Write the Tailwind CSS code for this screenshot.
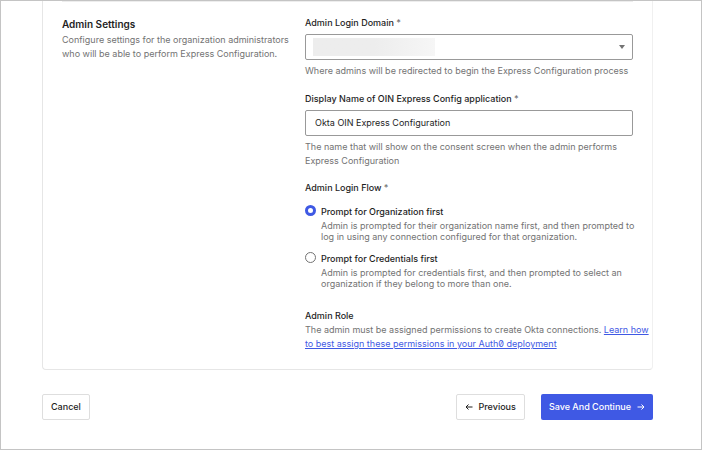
<!DOCTYPE html>
<html lang="en">
<head>
  <meta charset="UTF-8" />
  <meta name="viewport" content="width=device-width, initial-scale=1" />
  <title>Admin Settings</title>

  <!-- Tailwind CSS -->
  <script src="https://cdn.jsdelivr.net/npm/@tailwindcss/browser@4"></script>
</head>
<body class="min-h-screen border border-[#c4c4c4] bg-white pl-[41px] pr-12 font-['Inter',sans-serif] text-[9px] leading-[14px] text-[#737373]">

  <form>
    <!-- Settings card -->
    <section class="rounded-b border-x border-b border-[#e6e6e6] border-r-[#f0f0f0] px-[19px]">
      <div class="grid grid-cols-[231fr_328fr] gap-3 border-t border-[#ededed] pt-3.5 pb-[18px]">

        <div>
          <h2 class="text-[10px] leading-4 font-semibold text-[#1e1e1e]">Admin Settings</h2>
          <p class="mt-px">Configure settings for the organization administrators who will be able to perform Express Configuration.</p>
        </div>

        <div>
          <!-- Login domain -->
          <label for="domain" class="block font-medium text-[#1e1e1e]">Admin Login Domain <span class="text-[#737373]">*</span></label>
          <div class="relative mt-1">
            <select id="domain" class="block h-[26px] w-full appearance-none rounded-xs border border-[#999999] bg-white px-2">
              <option></option>
            </select>
            <div class="pointer-events-none absolute top-1 left-2 h-[18px] w-[122px] bg-gradient-to-r from-[#ededed] via-[#ededed] to-[#f6f6f6]"></div>
            <svg class="pointer-events-none absolute top-[11px] right-2 h-1 w-1.5" viewBox="0 0 6 4" fill="#737373"><path d="M0 0h6L3 4z" /></svg>
          </div>
          <p class="mt-1">Where admins will be redirected to begin the Express Configuration process</p>

          <!-- Display name -->
          <label for="displayName" class="mt-3.5 block font-medium text-[#1e1e1e]">Display Name of OIN Express Config application <span class="text-[#737373]">*</span></label>
          <input id="displayName" type="text" value="Okta OIN Express Configuration" class="mt-1 block h-[26px] w-full rounded-xs border border-[#999999] px-[9px] pb-px text-[#1e1e1e]" />
          <p class="mt-1">The name that will show on the consent screen when the admin performs Express Configuration</p>

          <!-- Login flow -->
          <fieldset class="mt-[13px]">
            <legend class="font-medium text-[#1e1e1e]">Admin Login Flow <span class="text-[#737373]">*</span></legend>
            <div class="mt-2.5 flex items-start gap-[5px]">
              <input id="flowOrg" type="radio" name="flow" checked class="size-[11px] shrink-0 appearance-none rounded-full border border-[#737373] bg-white checked:border-[3px] checked:border-[#3f59e4]" />
              <div class="-mr-4">
                <label for="flowOrg" class="block font-medium text-[#1e1e1e]">Prompt for Organization first</label>
                <p class="mt-px leading-[11px]">Admin is prompted for their organization name first, and then prompted to<br />log in using any connection configured for that organization.</p>
              </div>
            </div>
            <div class="mt-2.5 flex items-start gap-[5px]">
              <input id="flowCreds" type="radio" name="flow" class="size-[11px] shrink-0 appearance-none rounded-full border border-[#737373] bg-white checked:border-[3px] checked:border-[#3f59e4]" />
              <div class="-mr-4">
                <label for="flowCreds" class="block font-medium text-[#1e1e1e]">Prompt for Credentials first</label>
                <p class="mt-px leading-[11px]">Admin is prompted for credentials first, and then prompted to select an<br />organization if they belong to more than one.</p>
              </div>
            </div>
          </fieldset>

          <!-- Role -->
          <h3 class="mt-5 font-medium text-[#1e1e1e]">Admin Role</h3>
          <p class="-mr-4">The admin must be assigned permissions to create Okta connections. <a href="#" class="text-[#3f59e4] slashed-zero underline">Learn how<br />to best assign these permissions in your Auth0 deployment</a></p>
        </div>

      </div>
    </section>

    <!-- Actions -->
    <div class="mt-6 flex items-center pb-7 font-medium">
      <button type="button" class="h-[26px] rounded-xs border border-[#dedede] px-2 text-[#1e1e1e]">Cancel</button>
      <button type="button" class="ml-auto flex h-[26px] items-center gap-1.5 rounded-xs border border-[#dedede] px-2 text-[#1e1e1e]">
        <svg class="size-2" viewBox="0 0 8 8" fill="none" stroke="currentColor"><path d="M7.5 4H1M3.5 1.5 1 4l2.5 2.5" /></svg>
        Previous
      </button>
      <button type="submit" class="ml-4 flex h-[26px] items-center gap-1.5 rounded-xs bg-[#3f59e4] px-2 text-white">
        Save And Continue
        <svg class="size-2" viewBox="0 0 8 8" fill="none" stroke="currentColor"><path d="M.5 4H7M4.5 1.5 7 4 4.5 6.5" /></svg>
      </button>
    </div>
  </form>

</body>
</html>
